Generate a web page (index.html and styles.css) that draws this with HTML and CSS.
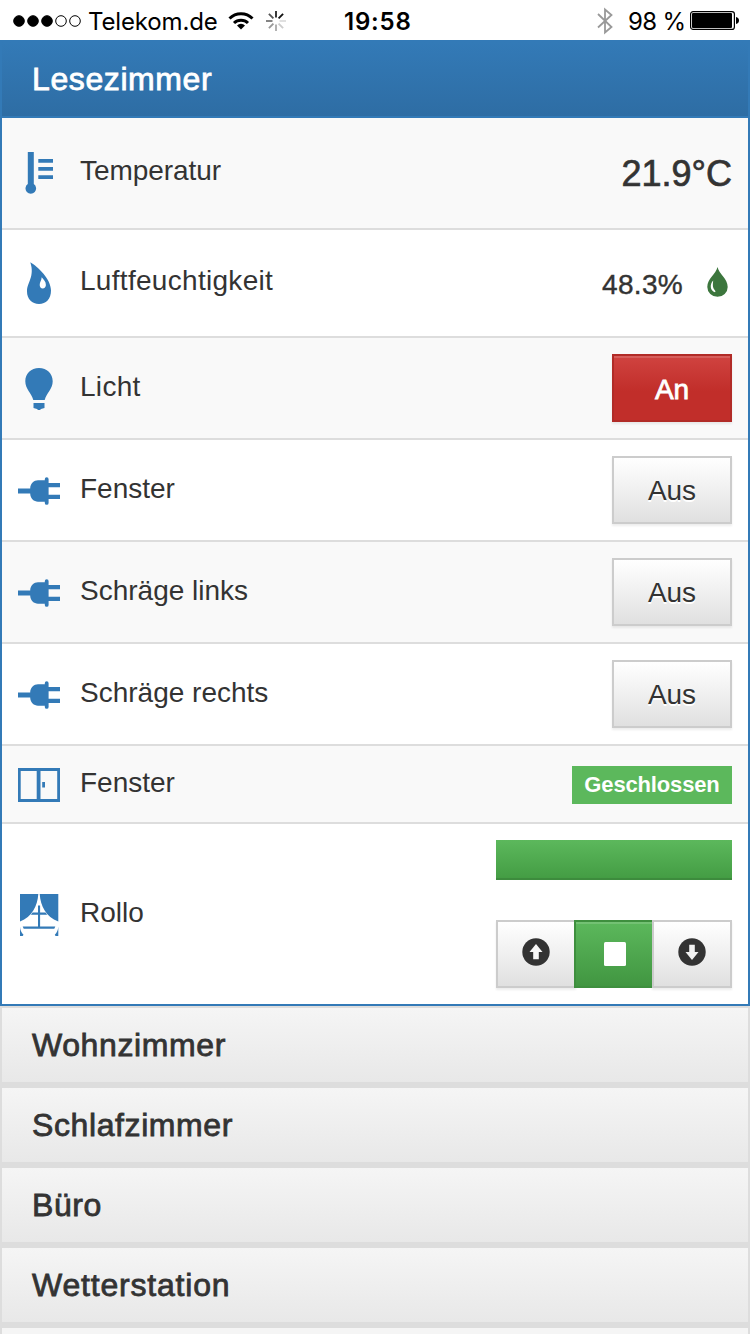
FILE: index.html
```
<!DOCTYPE html>
<html lang="de">
<head>
<meta charset="utf-8">
<title>Lesezimmer</title>
<link rel="stylesheet" href="styles.css">
</head>
<body>
<svg class="defs" width="0" height="0">
  <symbol id="plug" viewBox="0 0 42 28">
    <path d="M0 11.500h12.200C12.200 6.500 16 3.200 20 3.200h6.800V2.200a1.900 1.900 0 0 1 3.800 0V6H42v4.200H30.600v7.500H42v4.200H30.600v4a1.900 1.900 0 0 1-3.800 0v-1.200H20c-4 0-7.800-3.300-7.800-8.200H0z"/>
  </symbol>
</svg>
<header class="status">
  <svg class="signal" width="68" height="12" viewBox="0 0 68 12"><g stroke="#000"><circle cx="6" cy="6" r="5.300"/><circle cx="20" cy="6" r="5.300"/><circle cx="34" cy="6" r="5.300"/><circle cx="48" cy="6" r="5.300" fill="none"/><circle cx="62" cy="6" r="5.300" fill="none"/></g></svg>
  <span class="carrier">Telekom.de</span>
  <svg class="wifi" width="26" height="20" viewBox="0 0 26 20"><g fill="none" stroke="#000" stroke-width="3"><path d="M1.500 7.500a16.300 16.300 0 0 1 23 0"/><path d="M6 12a10 10 0 0 1 14 0"/></g><path d="M13 18.500l-4-4a5.700 5.700 0 0 1 8 0z"/></svg>
  <svg class="spinner" width="20" height="20" viewBox="0 0 20 20"><g stroke-width="1.800"><path stroke="#222" d="M10 0v6.500"/><path stroke="#111" d="M12.600 7.400l4.500-4.500"/><path stroke="#ddd" d="M13.500 10H20"/><path stroke="#ccc" d="M12.600 12.600l4.500 4.500"/><path stroke="#aaa" d="M10 13.500V20"/><path stroke="#999" d="M7.400 12.600l-4.500 4.500"/><path stroke="#777" d="M6.500 10H0"/><path stroke="#555" d="M7.400 7.400L2.900 2.900"/></g></svg>
  <span class="clock">19:58</span>
  <svg class="bluetooth" width="16" height="28" viewBox="0 0 16 28"><path d="M1 7l13.500 13L8 25.500v-23L14.500 8 1 20.500" fill="none" stroke="#999" stroke-width="1.800"/></svg>
  <span class="charge">98 %</span>
  <svg class="battery" width="49" height="19" viewBox="0 0 49 19"><rect x=".6" y=".6" width="43.800" height="17.800" rx="2.500" fill="none" stroke="#000" stroke-width="1.200"/><rect x="2" y="2" width="40" height="15" rx="1"/><path d="M46 6c4 .5 4 6.500 0 7z"/></svg>
</header>
<main>
  <section class="panel">
    <h2 class="panel-title">Lesezimmer</h2>
    <div class="row temperature">
      <svg class="icon" viewBox="0 0 42 42"><path d="M9.800 0h6v32a5.300 5.300 0 1 1-6 0zM20.300 7H35v3.800H20.300zM20.300 15H35v3.800H20.300zM20.300 23.200H35V27H20.300z"/></svg>
      <span class="label tight">Temperatur</span>
      <strong class="value big">21.9°C</strong>
    </div>
    <div class="row humidity">
      <svg class="icon" viewBox="0 0 42 42"><path fill-rule="evenodd" d="M12.300.3C20 5 33 17 33 28.500 33 37 28 42 21 42S9 37 9 29.500C9 20 17 15 12.300.3zM23.700 15.300c-.2 3.500-2 4.700-2 7.700 0 2 1.200 3.400 3 3.400s3.200-1.400 3.200-3.400c0-3.500-2.200-5.200-4.200-7.700z"/></svg>
      <span class="label wide">Luftfeuchtigkeit</span>
      <strong class="value percent">48.3%</strong>
      <svg class="drop" width="21" height="30" viewBox="0 0 21 30"><path fill="#3c763d" d="M10.500 0c1.500 7 10.200 11.500 10.200 20a10.200 9.800 0 0 1-20.400 0C.3 11.500 9 7 10.500 0z"/><path fill="#fff" d="M6.200 13.500C2.500 17 3 24 8 25.200c.8-.5.300-1.200 0-1.700-2.700-3-2.200-6-1.800-10z"/></svg>
    </div>
    <div class="row low">
      <svg class="icon" viewBox="0 0 42 42"><path d="M21 0c8 0 13.700 5.800 13.700 13.300 0 8-6.200 11.700-8 18.700H15.300c-1.800-7-8-10.700-8-18.700C7.300 5.800 13 0 21 0zM15.500 35h11v5l-3.500 1-1 1h-2l-1-1-3.500-1z"/></svg>
      <span class="label wide">Licht</span>
      <button class="btn danger">An</button>
    </div>
    <div class="row low">
      <svg class="icon plug"><use href="#plug"/></svg>
      <span class="label">Fenster</span>
      <button class="btn">Aus</button>
    </div>
    <div class="row low">
      <svg class="icon plug"><use href="#plug"/></svg>
      <span class="label">Schräge links</span>
      <button class="btn">Aus</button>
    </div>
    <div class="row low">
      <svg class="icon plug"><use href="#plug"/></svg>
      <span class="label">Schräge rechts</span>
      <button class="btn">Aus</button>
    </div>
    <div class="row low window">
      <svg class="icon" viewBox="0 0 42 42"><path fill-rule="evenodd" d="M0 4h42v34H0zM2.700 7v28h16V7zM22.500 7v28h16.700V7z"/><path d="M24.200 18h2.800v5.500h-2.800z"/></svg>
      <span class="label">Fenster</span>
      <span class="badge">Geschlossen</span>
    </div>
    <div class="row low blind">
      <svg class="icon" viewBox="0 0 42 42"><path d="M2 0h18.300C19.500 12 14 23 2 27.500zM21.700 0H40.300v27.500C28 23 22.500 12 21.700 0zM20 11.500h2.100v7h5.400l1.700 2.300h-7.100v11.700H37.300l-1 2.300H5.700l-1-2.300H20V20.800h-7.100l1.700-2.300H20zM2 32.500c.2 3.500 1.200 6 3.500 8.300l-.8 1.200H2zM40.300 32.500c-.2 3.500-1.200 6-3.500 8.300l.8 1.200h2.700z"/></svg>
      <span class="label">Rollo</span>
      <div class="controls">
        <div class="progress"></div>
        <div class="group">
          <button class="btn" aria-label="Auf"><svg width="28" height="28" viewBox="0 0 28 28"><circle cx="14" cy="14" r="13.700" fill="#333"/><path fill="#f8f8f8" d="M14 6l6.500 8h-3.700v7.200h-5.600V14H7.500z"/></svg></button>
          <button class="btn success" aria-label="Stopp"><svg width="22" height="24" viewBox="0 0 22 24"><rect width="22" height="24" rx="1.500" fill="#fff"/></svg></button>
          <button class="btn" aria-label="Ab"><svg width="28" height="28" viewBox="0 0 28 28"><circle cx="14" cy="14" r="13.700" fill="#333"/><path fill="#f1f1f1" d="M14 22l6.500-8h-3.700V6.800h-5.600V14H7.500z"/></svg></button>
        </div>
      </div>
    </div>
  </section>
  <h2 class="closed">Wohnzimmer</h2>
  <h2 class="closed">Schlafzimmer</h2>
  <h2 class="closed">Büro</h2>
  <h2 class="closed wider">Wetterstation</h2>
  <div class="closed cut"></div>
</main>
</body>
</html>
```
FILE: styles.css
```
* { box-sizing: border-box; }
body { margin: 0; width: 750px; height: 1334px; overflow: hidden; background: #fff; color: #333; font-family: "Liberation Sans", Arial, sans-serif; }
svg { display: block; flex: none; }
.defs { position: absolute; }
.status { display: flex; align-items: center; height: 40px; padding: 1px 11px 0 13px; color: #000; font: 24px/39px Inter, sans-serif; white-space: nowrap; }
.carrier { width: 129px; margin-left: 7px; padding-top: 1px; letter-spacing: -.15px; }
.wifi { margin-left: 11px; }
.spinner { margin-left: 12px; }
.clock { width: 68px; margin-left: 58px; padding-top: 1px; font-weight: 600; letter-spacing: .8px; }
.bluetooth { margin-left: 185px; }
.charge { width: 56px; margin-left: 15px; padding-top: 1px; letter-spacing: -.7px; }
.battery { margin-left: 6px; }

.panel { height: 966px; border: 2px solid #337ab7; }
.panel-title, .closed { margin: 0; padding-left: 30px; font-size: 32px; font-weight: 400; line-height: 74px; letter-spacing: .6px; -webkit-text-stroke: .8px currentColor; }
.panel-title { height: 76px; border-bottom: 2px solid #337ab7; background: linear-gradient(#337ab7, #2e6da4); color: #fff; }
.closed { height: 80px; border: 2px solid #ddd; border-bottom-width: 4px; background: linear-gradient(#f5f5f5, #e8e8e8); }
.wider { letter-spacing: .8px; }
.cut { height: 8px; border-bottom: 0; background: #f5f5f5; }
main { height: 1294px; overflow: hidden; }

.row { display: flex; align-items: center; height: 102px; padding: 0 16px; border-bottom: 2px solid #ddd; background: #fff; }
.row:nth-child(even) { background: #f9f9f9; }
.temperature { height: 112px; }
.humidity { height: 108px; }
.window { height: 78px; }
.row.blind { height: 180px; border: 0; }
.icon { width: 42px; height: 42px; fill: #337ab7; }
.low .icon { margin-top: 2px; }
.low .icon.plug { height: 28px; margin-top: 2px; }
.label { margin: 0 auto 4px 20px; font-size: 28px; line-height: 40px; }
.low .label { margin-bottom: 2px; }
.wide { letter-spacing: .3px; }
.tight { letter-spacing: -.05px; }
.value { padding-top: 2px; font-weight: 400; -webkit-text-stroke: .7px currentColor; }
.big { font-size: 36px; }
.percent { padding-top: 3px; font-size: 28px; letter-spacing: .3px; -webkit-text-stroke-width: .4px; }
.drop { margin: 0 4px 2px 24px; }
.btn { display: flex; align-items: center; justify-content: center; width: 120px; height: 68px; padding: 2px 0 0; border: 2px solid #ccc; background: linear-gradient(#fff, #e0e0e0); box-shadow: 0 2px 2px rgba(0,0,0,.075); color: #333; font: 28px/40px "Liberation Sans", Arial, sans-serif; text-shadow: 0 2px 0 #fff; }
.danger { padding-top: 3px; border-color: #b12b27; background: linear-gradient(#d04340, #c12e2a 55%); box-shadow: inset 0 2px rgba(255,255,255,.15), 0 2px 2px rgba(0,0,0,.075); color: #fff; text-shadow: none; -webkit-text-stroke: .8px #fff; }
.badge { width: 160px; height: 38px; margin-top: 2px; background: #5cb85c; color: #fff; font-size: 22px; font-weight: 700; line-height: 37px; letter-spacing: -.15px; text-align: center; }
.controls { width: 236px; }
.progress { height: 40px; margin-bottom: 40px; border-bottom: 2px solid #3d8b3d; background: linear-gradient(#5cb85c, #449d44); }
.group { display: flex; }
.group .btn { width: 80px; padding: 0 0 4px; }
.group .btn + .btn { margin-left: -2px; }
.group .success { z-index: 1; width: 78px; padding: 0 0 0 2px; border-color: #3e8f3e; border-right-width: 0; background: linear-gradient(#5cb85c, #419641); box-shadow: inset 0 2px rgba(255,255,255,.15); }
.group .success + .btn { margin-left: 0; }
```
